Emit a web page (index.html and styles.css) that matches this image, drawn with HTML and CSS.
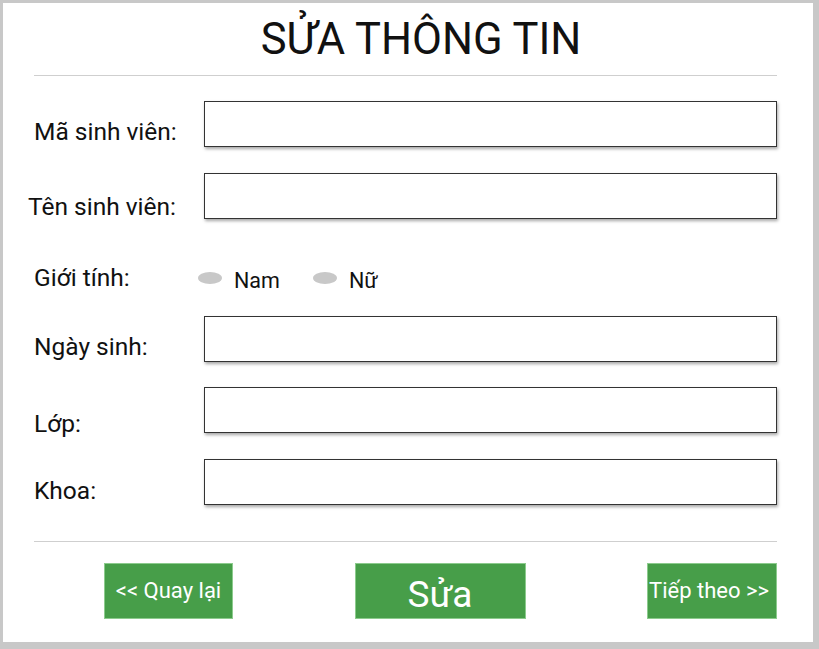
FILE: index.html
```html
<!DOCTYPE html>
<html lang="vi">
<head>
<meta charset="utf-8">
<title>Sửa thông tin</title>
<link rel="stylesheet" href="styles.css">
</head>
<body>
<div class="frame">
  <h1 class="title">SỬA THÔNG TIN</h1>
  <div class="rule"></div>
  <form class="form">
    <label class="label">Mã sinh viên:</label>
    <div class="field"></div>

    <label class="label label-wide">Tên sinh viên:</label>
    <div class="field"></div>

    <label class="label label-gender">Giới tính:</label>
    <div class="radios">
      <span class="radio"><span class="dot"></span>Nam</span>
      <span class="radio"><span class="dot"></span>Nữ</span>
    </div>

    <label class="label">Ngày sinh:</label>
    <div class="field"></div>

    <label class="label label-low">Lớp:</label>
    <div class="field"></div>

    <label class="label label-last">Khoa:</label>
    <div class="field"></div>
  </form>
  <div class="rule rule-bottom"></div>
  <div class="actions">
    <button class="btn btn-back" type="button">&lt;&lt; Quay lại</button>
    <button class="btn btn-main" type="button">Sửa</button>
    <button class="btn btn-next" type="button">Tiếp theo &gt;&gt;</button>
  </div>
</div>
</body>
</html>
```
FILE: styles.css
```css
html, body {
  margin: 0;
  padding: 0;
  background: #c8c8c8;
  font-family: Roboto, "Noto Sans", Arial, sans-serif;
  color: #111;
}
.frame {
  margin: 3px 6px 7px 3px;
  height: 639px;
  background: #fff;
  padding: 0 36px 0 31px;
  box-sizing: border-box;
  overflow: hidden;
}
.title {
  margin: 12px 0 0 0;
  padding-left: 31px;
  font-weight: 400;
  font-size: 43.5px;
  line-height: 50px;
  text-align: center;
  color: #111;
}
.rule {
  height: 1px;
  background: #cfcfcf;
  margin-top: 10px;
}
.form {
  display: grid;
  grid-template-columns: 170px 1fr;
  grid-auto-rows: 46px;
  row-gap: 25.5px;
  margin-top: 25px;
  align-items: start;
}
.label {
  font-size: 24.5px;
  line-height: 28px;
  padding-top: 17px;
  white-space: nowrap;
}
.label-wide {
  margin-left: -6px;
  padding-top: 20px;
}
.label-gender {
  padding-top: 20px;
}
.label-low {
  padding-top: 23px;
}
.label-last {
  padding-top: 18px;
}
.field {
  height: 46px;
  border: 1.5px solid #333;
  box-sizing: border-box;
  box-shadow: 1px 2px 3px rgba(0, 0, 0, 0.35);
  background: #fff;
}
.radios {
  display: flex;
  height: 46px;
  gap: 33px;
  padding-top: 25px;
  box-sizing: border-box;
  margin-left: -6px;
}
.radio {
  display: flex;
  align-items: center;
  font-size: 21.5px;
  line-height: 24px;
  height: 24px;
}
.dot {
  width: 24px;
  height: 12px;
  border-radius: 50%;
  background: #c8c8c8;
  margin-right: 12px;
  margin-top: -6px;
}
.rule-bottom {
  margin-top: 36px;
}
.actions {
  display: flex;
  justify-content: space-between;
  padding-left: 70px;
  margin-top: 21px;
}
.btn {
  height: 56px;
  border: 1px solid #8ccb8d;
  background: #479e49;
  color: #fff;
  font-family: Roboto, "Noto Sans", Arial, sans-serif;
  padding: 0;
  text-align: center;
  white-space: nowrap;
}
.btn-back {
  width: 129px;
  font-size: 22px;
}
.btn-main {
  width: 171px;
  font-size: 37px;
  padding-top: 8px;
}
.btn-next {
  width: 130px;
  font-size: 22px;
  padding-right: 6px;
}
```
